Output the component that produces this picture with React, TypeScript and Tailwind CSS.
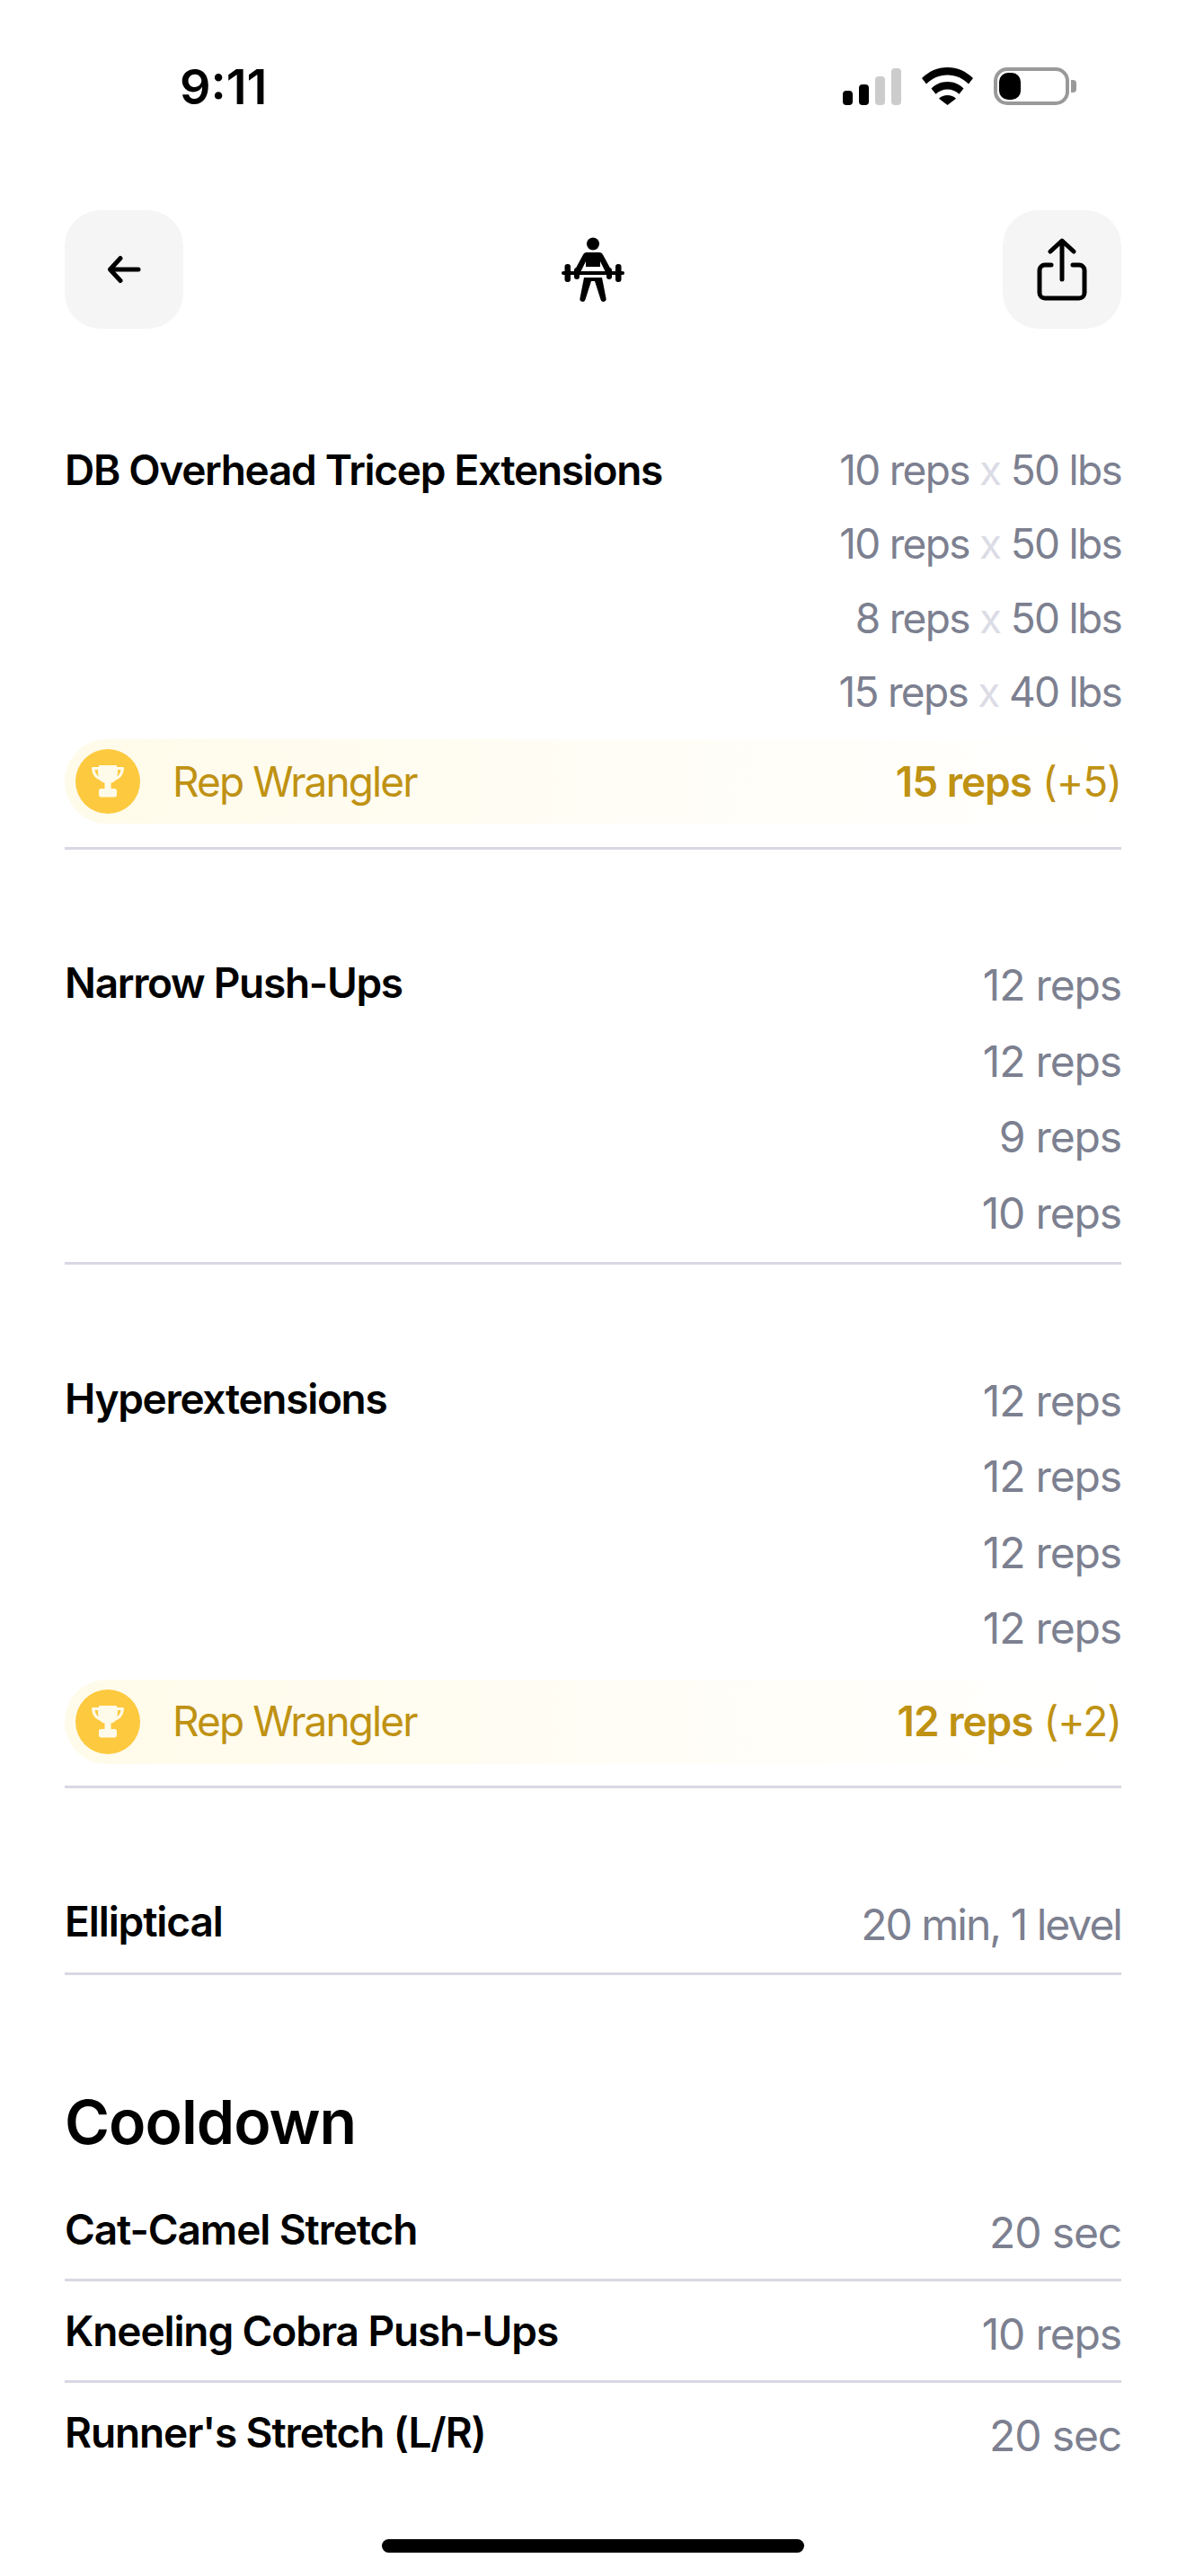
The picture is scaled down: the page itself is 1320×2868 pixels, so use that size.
const font = "font-['Inter',sans-serif]";

const BackIcon = () => (
  <svg width="38" height="32" viewBox="0 0 38 32" fill="none" stroke="#000" strokeWidth="5" strokeLinecap="round" strokeLinejoin="round">
    <path d="M35 16H4M15 3.5 3.5 16 15 28.5" />
  </svg>
);

const ShareIcon = () => (
  <svg width="56" height="70" viewBox="0 0 56 70" fill="none" stroke="#000" strokeWidth="5" strokeLinecap="round" strokeLinejoin="round">
    <path d="M28 46V4M15 15 28 3l13 12" />
    <path d="M16 30H9a6 6 0 0 0-6 6v25a6 6 0 0 0 6 6h38a6 6 0 0 0 6-6V36a6 6 0 0 0-6-6h-7" />
  </svg>
);

const LifterIcon = () => (
  <svg width="70" height="73" viewBox="0 0 70 73" fill="#000">
    <circle cx="35" cy="7.5" r="7" />
    <path d="M28 17H42c2 0 3.200 1 4 2.500L56 38l-6 3-7-14v6H27v-6l-7 14-6-3 10-18.500C24.800 18 26 17 28 17z" />
    <rect x="0" y="38" width="70" height="4" rx="2" />
    <rect x="3.500" y="30" width="6.500" height="20" rx="3" />
    <rect x="60" y="30" width="6.500" height="20" rx="3" />
    <rect x="14" y="34" width="6" height="13" rx="3" />
    <rect x="50" y="34" width="6" height="13" rx="3" />
    <path d="M25 45H45l4.500 23a3 3 0 0 1-6 1.500L37 49h-4l-6.500 20.500a3 3 0 0 1-6-1.500z" />
  </svg>
);

const TrophyIcon = () => (
  <svg width="40" height="40" viewBox="0 0 40 40" fill="#fffbea">
    <path d="M10 2h20v2h6.500c1 0 1.500.7 1.400 1.700-.5 5.500-2.700 10.500-9 12.700-1.500 1.700-3.400 2.800-5.400 3.300V28h4c1.500 0 2.500 1 2.500 2.500V35c0 1.500-1 2.500-2.500 2.500H12.500C11 37.500 10 36.500 10 35v-4.500C10 29 11 28 12.500 28h4v-6.300c-2-.5-3.900-1.600-5.400-3.300-6.300-2.200-8.500-7.200-9-12.700C2 4.700 2.500 4 3.500 4H10V2zM5.500 7c.5 3 1.700 5.700 4.300 7.500-.8-2.300-.8-5-.8-7.500H5.500zm29 0H31c0 2.500 0 5.200-.8 7.500 2.600-1.800 3.800-4.500 4.300-7.500z" />
  </svg>
);

const StatusBar = () => (
  <div className="flex h-[117px] items-end justify-between pl-[200px] pr-[122px]">
    <span className="text-[54px] leading-[40px] font-semibold text-black">9:11</span>
    <div className="flex items-end gap-[23px]">
      <div className="flex items-end gap-[7px]">
        <div className="h-[16px] w-[11px] rounded-[4px] bg-black" />
        <div className="h-[23px] w-[11px] rounded-[4px] bg-black" />
        <div className="h-[32px] w-[11px] rounded-[4px] bg-[#cccccc]" />
        <div className="h-[41px] w-[11px] rounded-[4px] bg-[#cccccc]" />
      </div>
      <svg width="57" height="42" viewBox="0 0 57 42" fill="#000">
        <path d="M28.500 0C17.500 0 8 4.300 0 12l5 6.500C11.500 12 19.500 8.500 28.500 8.500S45.500 12 52 18.500l5-6.500C49 4.300 39.500 0 28.500 0z" />
        <path d="M28.500 16c-7 0-13 2.700-18 7.500l5 6.300c3.500-3.300 8-5.300 13-5.300s9.500 2 13 5.300l5-6.300c-5-4.800-11-7.500-18-7.500z" />
        <path d="M28.500 31c-3.700 0-7 1.300-9.500 3.700L28.500 42 38 34.700c-2.500-2.400-5.800-3.700-9.500-3.700z" />
      </svg>
      <div className="flex items-center gap-[2px]">
        <div className="flex h-[42px] w-[84px] items-center rounded-[15px] border-[4px] border-[#999999] pl-[2px]">
          <div className="h-[30px] w-[24px] rounded-[10px] bg-black" />
        </div>
        <div className="h-[14px] w-[6px] rounded-r-[4px] bg-[#999999]" />
      </div>
    </div>
  </div>
);

const HeaderBar = () => (
  <div className="mt-[117px] flex h-[132px] items-center justify-between">
    <button className="flex h-[132px] w-[132px] items-center justify-center rounded-[40px] bg-[#f5f5f5]">
      <BackIcon />
    </button>
    <LifterIcon />
    <button className="flex h-[132px] w-[132px] items-center justify-center rounded-[40px] bg-[#f5f5f5]">
      <ShareIcon />
    </button>
  </div>
);

const Divider = () => <div className="h-[3px] bg-[#d8d8e4]" />;

const Award = ({ value, delta }: { value: string; delta: string }) => (
  <div className="mt-[12px] flex h-[94px] items-center rounded-l-[47px] bg-gradient-to-r from-[#fffbea] to-white pl-[12px]">
    <div className="flex h-[72px] w-[72px] items-center justify-center rounded-full bg-[#fdc93f]">
      <TrophyIcon />
    </div>
    <span className="ml-[36px] text-[46px] font-normal tracking-[-1.9px] text-[#bf9213]">Rep Wrangler</span>
    <span className="ml-auto text-[46px] tracking-[-1px] text-[#bf9213]">
      <span className="font-semibold">{value}</span> {delta}
    </span>
  </div>
);

const Weighted = ({ reps, weight }: { reps: string; weight: string }) => (
  <div className="h-[82.3px] leading-[82.3px]">
    {reps} <span className="text-[#dcdce6]">x</span> {weight}
  </div>
);

const Exercise = ({ name, sets }: { name: string; sets: string[] }) => (
  <div className="flex justify-between">
    <h3 className="-mt-[3px] text-[46px] leading-[84.6px] font-semibold tracking-[-1.3px] text-black">{name}</h3>
    <div className="text-right text-[48px] leading-[84.6px] tracking-[-1.15px] text-[#7c8090]">
      {sets.map((set, index) => (
        <div key={index}>{set}</div>
      ))}
    </div>
  </div>
);

const SimpleRow = ({ name, value, valueTracking = "tracking-[-1.15px]" }: { name: string; value: string; valueTracking?: string }) => (
  <div className="flex h-[56px] items-center justify-between">
    <span className="text-[46px] leading-[56px] font-semibold tracking-[-1.1px] text-black">{name}</span>
    <span className={`pt-[8px] text-[48px] leading-[56px] text-[#7c8090] ${valueTracking}`}>{value}</span>
  </div>
);

export default function App() {
  return (
    <div className={`h-[2868px] w-[1320px] overflow-hidden bg-white ${font}`}>
      <StatusBar />
      <div className="px-[72px]">
        <HeaderBar />

        <div className="mt-[116px]">
          <div className="flex justify-between">
            <h3 className="text-[46px] leading-[82.3px] font-semibold tracking-[-1.3px] text-black">DB Overhead Tricep Extensions</h3>
            <div className="text-right text-[46px] tracking-[-1.7px] text-[#7c8090]">
              <Weighted reps="10 reps" weight="50 lbs" />
              <Weighted reps="10 reps" weight="50 lbs" />
              <Weighted reps="8 reps" weight="50 lbs" />
              <Weighted reps="15 reps" weight="40 lbs" />
            </div>
          </div>
          <Award value="15 reps" delta="(+5)" />
          <div className="mt-[26px]">
            <Divider />
          </div>
        </div>

        <div className="mt-[109px]">
          <Exercise name="Narrow Push-Ups" sets={["12 reps", "12 reps", "9 reps", "10 reps"]} />
          <div className="mt-[11px]">
            <Divider />
          </div>
        </div>

        <div className="mt-[110px]">
          <Exercise name="Hyperextensions" sets={["12 reps", "12 reps", "12 reps", "12 reps"]} />
          <div className="pt-[2px]">
            <Award value="12 reps" delta="(+2)" />
          </div>
          <div className="mt-[24px]">
            <Divider />
          </div>
        </div>

        <div className="mt-[120px]">
          <SimpleRow name="Elliptical" value="20 min, 1 level" valueTracking="tracking-[-2px]" />
          <div className="mt-[29px]">
            <Divider />
          </div>
        </div>

        <h2 className="mt-[123px] text-[68px] leading-[80px] font-semibold tracking-[-1px] text-black">Cooldown</h2>

        <div className="mt-[52px] flex flex-col gap-[27px]">
          <SimpleRow name="Cat-Camel Stretch" value="20 sec" />
          <Divider />
          <SimpleRow name="Kneeling Cobra Push-Ups" value="10 reps" />
          <Divider />
          <SimpleRow name="Runner's Stretch (L/R)" value="20 sec" />
        </div>
      </div>
      <div className="mx-auto mt-[91px] h-[15px] w-[470px] rounded-full bg-black" />
    </div>
  );
}
